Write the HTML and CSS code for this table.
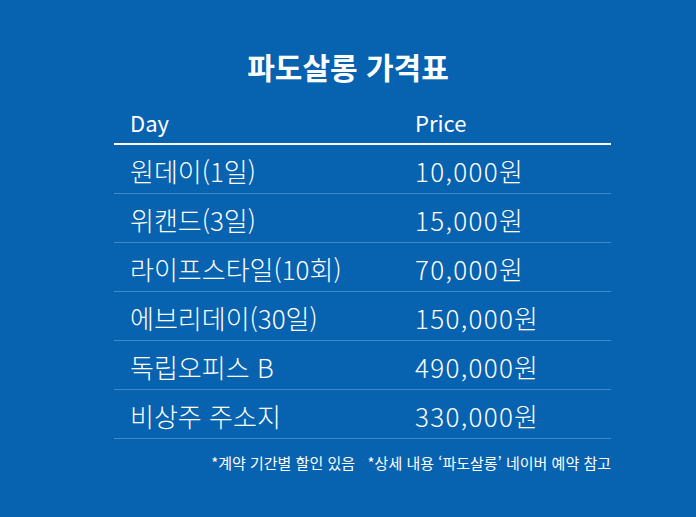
FILE: index.html
```html
<!DOCTYPE html>
<html lang="ko">
<head>
<meta charset="utf-8">
<link rel="stylesheet" href="styles.css">
</head>
<body>
<div class="page">
  <h1 class="title">파도살롱 가격표</h1>
  <div class="table">
    <div class="row head"><span class="c1">Day</span><span class="c2">Price</span></div>
    <div class="row"><span class="c1">원데이(1일)</span><span class="c2">10,000원</span></div>
    <div class="row"><span class="c1">위캔드(3일)</span><span class="c2">15,000원</span></div>
    <div class="row"><span class="c1">라이프스타일(10회)</span><span class="c2">70,000원</span></div>
    <div class="row"><span class="c1">에브리데이(30일)</span><span class="c2">150,000원</span></div>
    <div class="row"><span class="c1">독립오피스 B</span><span class="c2">490,000원</span></div>
    <div class="row"><span class="c1">비상주 주소지</span><span class="c2">330,000원</span></div>
  </div>
  <p class="note">*계약 기간별 할인 있음&nbsp;&nbsp;&nbsp;*상세 내용 ‘파도살롱’ 네이버 예약 참고</p>
</div>
</body>
</html>
```
FILE: styles.css
```css
html, body { margin: 0; padding: 0; }
body {
  background: #0762b0;
  color: #fff;
  font-family: "Noto Sans CJK KR", "Noto Sans", sans-serif;
  width: 696px;
  height: 517px;
  overflow: hidden;
}
.page { padding-top: 44px; }
.title {
  margin: 0;
  text-align: center;
  font-size: 30px;
  font-weight: 700;
  line-height: 44px;
}
.table {
  margin: 15px 0 0 114px;
  width: 497px;
}
.row {
  display: flex;
  align-items: center;
  height: 48px;
  border-bottom: 1px solid #4088c8;
  font-size: 26px;
  font-weight: 200;
  line-height: 34px;
}
.row.head {
  height: 40px;
  border-bottom: 2px solid #fff;
  font-size: 22px;
  font-weight: 400;
  line-height: 30px;
}
.c1 { width: 285px; padding-left: 16px; }
.c2 { flex: 1; letter-spacing: 1.3px; }
.row .c1, .row .c2 { padding-top: 4px; }
.row.head .c1, .row.head .c2 { padding-top: 0; padding-bottom: 3px; letter-spacing: 0; }
.note {
  margin: 14px 0 0 0;
  width: 611px;
  text-align: right;
  font-size: 15px;
  line-height: 20px;
  font-weight: 400;
}
```
